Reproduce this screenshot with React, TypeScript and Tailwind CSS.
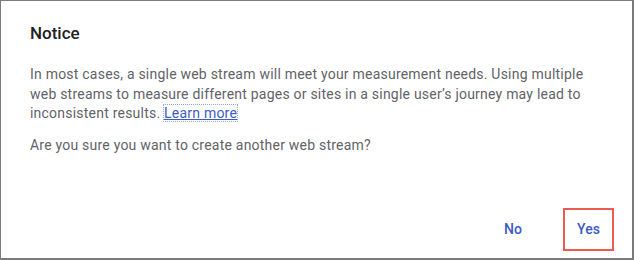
export default function App() {
  return (
    <div
      className="flex h-[260px] w-[634px] flex-col border-t border-l border-r-2 border-b-2 border-[#7b7b7b] bg-white"
      style={{ fontFamily: "Roboto, 'Liberation Sans', sans-serif" }}
    >
      <div className="px-[29px] pt-[20px]">
        <h2 className="text-[17px] font-medium leading-[24px] text-[#202124]">Notice</h2>
        <p className="mt-[20px] w-[566px] text-[14px] leading-[19.5px] tracking-[0.22px] text-[#5f6368]">
          In most cases, a single web stream will meet your measurement needs. Using multiple web streams to measure
          different pages or sites in a single user’s journey may lead to inconsistent results.{" "}
          <a className="text-[#3b5cc4] underline outline-1 outline-dotted outline-[#8fa8e0]" href="#">
            Learn more
          </a>
        </p>
        <p className="mt-[12px] text-[14px] leading-[19.5px] tracking-[0.22px] text-[#5f6368]">
          Are you sure you want to create another web stream?
        </p>
      </div>
      <div className="mt-auto flex items-center justify-end gap-[33px] pr-[18px] pb-[7px]">
        <button className="h-[36px] px-[8px] text-[14px] font-medium text-[#3b5cc4]">No</button>
        <div className="flex h-[43px] w-[51px] items-center justify-center border-2 border-[#ef5a4f]">
          <button className="text-[14px] font-medium text-[#3b5cc4]">Yes</button>
        </div>
      </div>
    </div>
  )
}
